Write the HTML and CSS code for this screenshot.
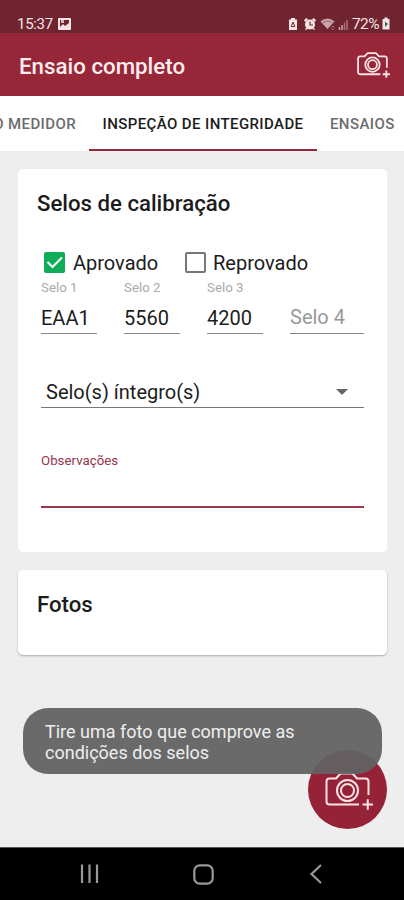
FILE: index.html
```
<!DOCTYPE html>
<html lang="pt-BR">
<head>
	<meta charset="utf-8">
	<title>Ensaio completo</title>
	<link rel="stylesheet" href="styles.css">
</head>
<body>
	<svg class="defs" width="0" height="0">
		<symbol id="camera" viewBox="0 0 48 38">
			<g fill="none" stroke="currentColor" stroke-linejoin="round">
				<path d="M34 32.5H4.500Q1.500 32.500 1.500 29.500V9.500Q1.500 6.500 4.500 6.500H11L15.500 1.500H27.500L32 6.500H40.500Q43.500 6.500 43.500 9.500V23"/>
				<circle cx="22.500" cy="18.500" r="10.500"/>
				<circle cx="22.500" cy="18.500" r="6.500"/>
				<path d="M37.500 32.500H48M42.750 27.200V37.800"/>
			</g>
		</symbol>
	</svg>

	<div class="status">
		<span class="time">15:37</span>
		<svg class="picture" width="13" height="12" viewBox="0 0 13 12">
			<rect width="13" height="12" rx="1" fill="#f3e4e6"/>
			<path d="M2 2H11V5L7 8L5 6L2 9Z" fill="#70242f"/>
			<path d="M3 2H6V5H3Z" fill="#d9b9be"/>
		</svg>
		<svg class="tray" width="60" height="14" viewBox="0 0 60 14">
			<g fill="#f3e4e6">
				<path d="M3 1H7V2.500H9V13H1V2.500H3Z"/>
				<circle cx="22" cy="7.500" r="5"/>
				<path d="M16 3L18.500 1L20 2.500L17 5ZM28 3L25.500 1L24 2.500L27 5ZM17 13L18 10.500L20 12ZM27 13L26 10.500L24 12Z"/>
			</g>
			<path d="M5 5L3.200 9.500H6.800Z" fill="none" stroke="#70242f"/>
			<path d="M22 4.500V8H25" fill="none" stroke="#70242f" stroke-width="1.200"/>
			<path d="M32.500 4.500Q39.500 -1.500 46.500 4.500L39.500 12Z" fill="#c9a4aa"/>
			<path d="M34.500 6Q39.500 2 44.500 6" fill="none" stroke="#8e5059" stroke-width="0.800"/>
			<path d="M43.500 10.500L45 9L46.500 10.500M43 11.500L44.500 13L46 11.500" fill="none" stroke="#a8747c"/>
			<path d="M51.500 13V10M54 13V8" stroke="#c9a4aa" stroke-width="1.500"/>
			<path d="M56.500 13V5.500M59 13V3" stroke="#a8747c" stroke-width="1.500"/>
		</svg>
		<span class="percent">72%</span>
		<svg class="battery" width="8" height="13" viewBox="0 0 8 13">
			<path d="M2.500 0.500H5.500V2H7.500V12.500H0.500V2H2.500Z" fill="#f3e4e6"/>
			<path d="M3 4.500L6 7L3 10Z" fill="#386b4c"/>
		</svg>
	</div>

	<header class="appbar">
		<h1>Ensaio completo</h1>
		<svg class="camera small"><use href="#camera"/></svg>
	</header>

	<nav class="tabs">
		<span class="tab first">O MEDIDOR</span>
		<span class="tab active">INSPEÇÃO DE INTEGRIDADE</span>
		<span class="tab last">ENSAIOS</span>
	</nav>

	<main>
		<section class="card seals">
			<h2>Selos de calibração</h2>
			<div class="checks">
				<label class="approved"><span class="box checked">
					<svg width="21" height="21" viewBox="0 0 21 21"><path d="M3.500 10L8.500 15L18 5.500" fill="none" stroke="#fff" stroke-width="2"/></svg>
				</span><span>Aprovado</span></label>
				<label class="rejected"><span class="box"></span><span>Reprovado</span></label>
			</div>
			<div class="fields">
				<div class="field"><small>Selo 1</small><span>EAA1</span></div>
				<div class="field"><small>Selo 2</small><span>5560</span></div>
				<div class="field"><small>Selo 3</small><span>4200</span></div>
				<div class="field empty"><span>Selo 4</span></div>
			</div>
			<div class="select">
				<span>Selo(s) íntegro(s)</span>
				<i class="arrow"></i>
			</div>
			<div class="notes">Observações</div>
		</section>

		<section class="card photos">
			<h2>Fotos</h2>
		</section>
	</main>

	<div class="fab"><svg class="camera"><use href="#camera"/></svg></div>
	<div class="toast">Tire uma foto que comprove as<br>condições dos selos</div>

	<footer class="keys">
		<svg width="20" height="20" viewBox="0 0 20 20"><path d="M2 0.500V19M9.500 0.500V19M17 0.500V19"/></svg>
		<svg width="21" height="21" viewBox="0 0 21 21"><rect x="1.300" y="1.300" width="18.400" height="18.400" rx="5.500"/></svg>
		<svg width="20" height="20" viewBox="0 0 20 20"><path d="M15 1L5.500 10L15 19"/></svg>
	</footer>
</body>
</html>
```

FILE: styles.css
```
* {
	margin: 0;
	padding: 0;
	box-sizing: border-box;
}

body {
	position: relative;
	display: flex;
	flex-direction: column;
	height: 900px;
	overflow: hidden;
	background: #eee;
	color: #1c1c1c;
	font-family: Roboto, sans-serif;
}

svg {
	display: block;
	flex: none;
}

.defs {
	position: absolute;
}

.status {
	display: flex;
	align-items: center;
	height: 33px;
	padding: 14px 14px 0 17px;
	background: #70242f;
	color: #f3e4e6;
	font-size: 15px;
}

.time {
	width: 37px;
	letter-spacing: -0.3px;
}

.picture {
	margin-left: 4px;
}

.tray {
	margin-left: auto;
}

.percent {
	width: 29px;
	margin-left: 4px;
	font-size: 15.5px;
	letter-spacing: -0.6px;
}

.battery {
	margin-left: 1px;
}

.appbar {
	display: flex;
	align-items: center;
	justify-content: space-between;
	height: 63px;
	padding: 1px 14px 0 19px;
	background: #962638;
	color: #fbecee;
}

h1 {
	padding-top: 2px;
	font-size: 22.300px;
	font-weight: 500;
	line-height: 30px;
}

.camera {
	width: 48px;
	height: 38px;
	color: #fbe3e6;
	stroke-width: 2;
}

.camera.small {
	width: 33px;
	height: 26px;
	stroke-width: 2.6;
}

.tabs {
	display: flex;
	height: 55px;
	background: #fff;
	color: #6c6c6c;
	font-size: 15px;
	font-weight: 500;
	letter-spacing: 0.4px;
	line-height: 56px;
	white-space: nowrap;
}

.tab.first {
	display: flex;
	justify-content: flex-end;
	width: 89px;
	padding-right: 13px;
}

.tab.active {
	width: 228px;
	border-bottom: 2px solid #962638;
	color: #1c1c1c;
	text-align: center;
}

.tab.last {
	padding-left: 13px;
}

main {
	display: flex;
	flex: 1;
	flex-direction: column;
	gap: 18px;
	padding: 18px 17px 0 18px;
}

.card {
	border-radius: 5px;
	background: #fff;
}

h2 {
	height: 68px;
	padding-left: 19px;
	font-size: 22.200px;
	font-weight: 500;
	line-height: 68px;
}

.seals {
	height: 383px;
}

.photos {
	height: 85px;
	box-shadow: 0 1px 2px #aaa;
}

.checks {
	display: flex;
	height: 50px;
	padding-left: 26px;
	font-size: 20px;
}

.checks label {
	display: flex;
	align-items: center;
	gap: 8px;
}

.checks label span:last-child {
	padding-top: 2px;
}

.approved {
	width: 141px;
}

.box {
	width: 21px;
	height: 21px;
	border: 2px solid #777;
	border-radius: 2px;
}

.box.checked {
	border: 0;
	background: #0fad58;
}

.rejected .box + span {
	margin-left: -1px;
}

.fields {
	display: grid;
	grid-template-columns: 56px 56px 56px 74px;
	gap: 27px;
	height: 54px;
	margin: -7px 0 0 23px;
}

.field {
	display: flex;
	flex-direction: column;
	justify-content: space-between;
	border-bottom: 1px solid #888;
	font-size: 20px;
}

.field small {
	color: #aaa;
	font-size: 13.300px;
	line-height: 15px;
}

.field span {
	line-height: 29px;
}

.field.empty {
	justify-content: flex-end;
	color: #999;
}

.field.empty span {
	line-height: 32px;
}

.select {
	display: flex;
	align-items: center;
	justify-content: space-between;
	width: 323px;
	height: 34px;
	margin: 40px 0 0 23px;
	padding: 2px 16px 0 5px;
	border-bottom: 1px solid #777;
	font-size: 20px;
}

.arrow {
	border: 6px solid transparent;
	border-top-color: #666;
	border-bottom: 0;
}

.notes {
	width: 323px;
	height: 55px;
	margin: 45px 0 0 23px;
	border-bottom: 2px solid #98384a;
	color: #983447;
	font-size: 13.300px;
	line-height: 15px;
}

.fab {
	position: absolute;
	top: 750px;
	left: 308px;
	display: flex;
	align-items: center;
	justify-content: center;
	width: 79px;
	height: 79px;
	padding: 2px 0 0 2px;
	border-radius: 50%;
	background: #962238;
}

.toast {
	position: absolute;
	top: 708px;
	left: 23px;
	width: 359px;
	height: 66px;
	padding: 13px 22px;
	border-radius: 25px;
	background: rgba(98, 98, 98, .95);
	color: #eee;
	font-size: 18px;
	line-height: 21px;
}

.keys {
	display: flex;
	align-items: center;
	justify-content: space-between;
	height: 53px;
	padding: 0 78px 0 80px;
	border-top: 1px solid #555;
	background: #000;
}

.keys svg {
	fill: none;
	stroke: #999;
	stroke-width: 2.2;
}
```
